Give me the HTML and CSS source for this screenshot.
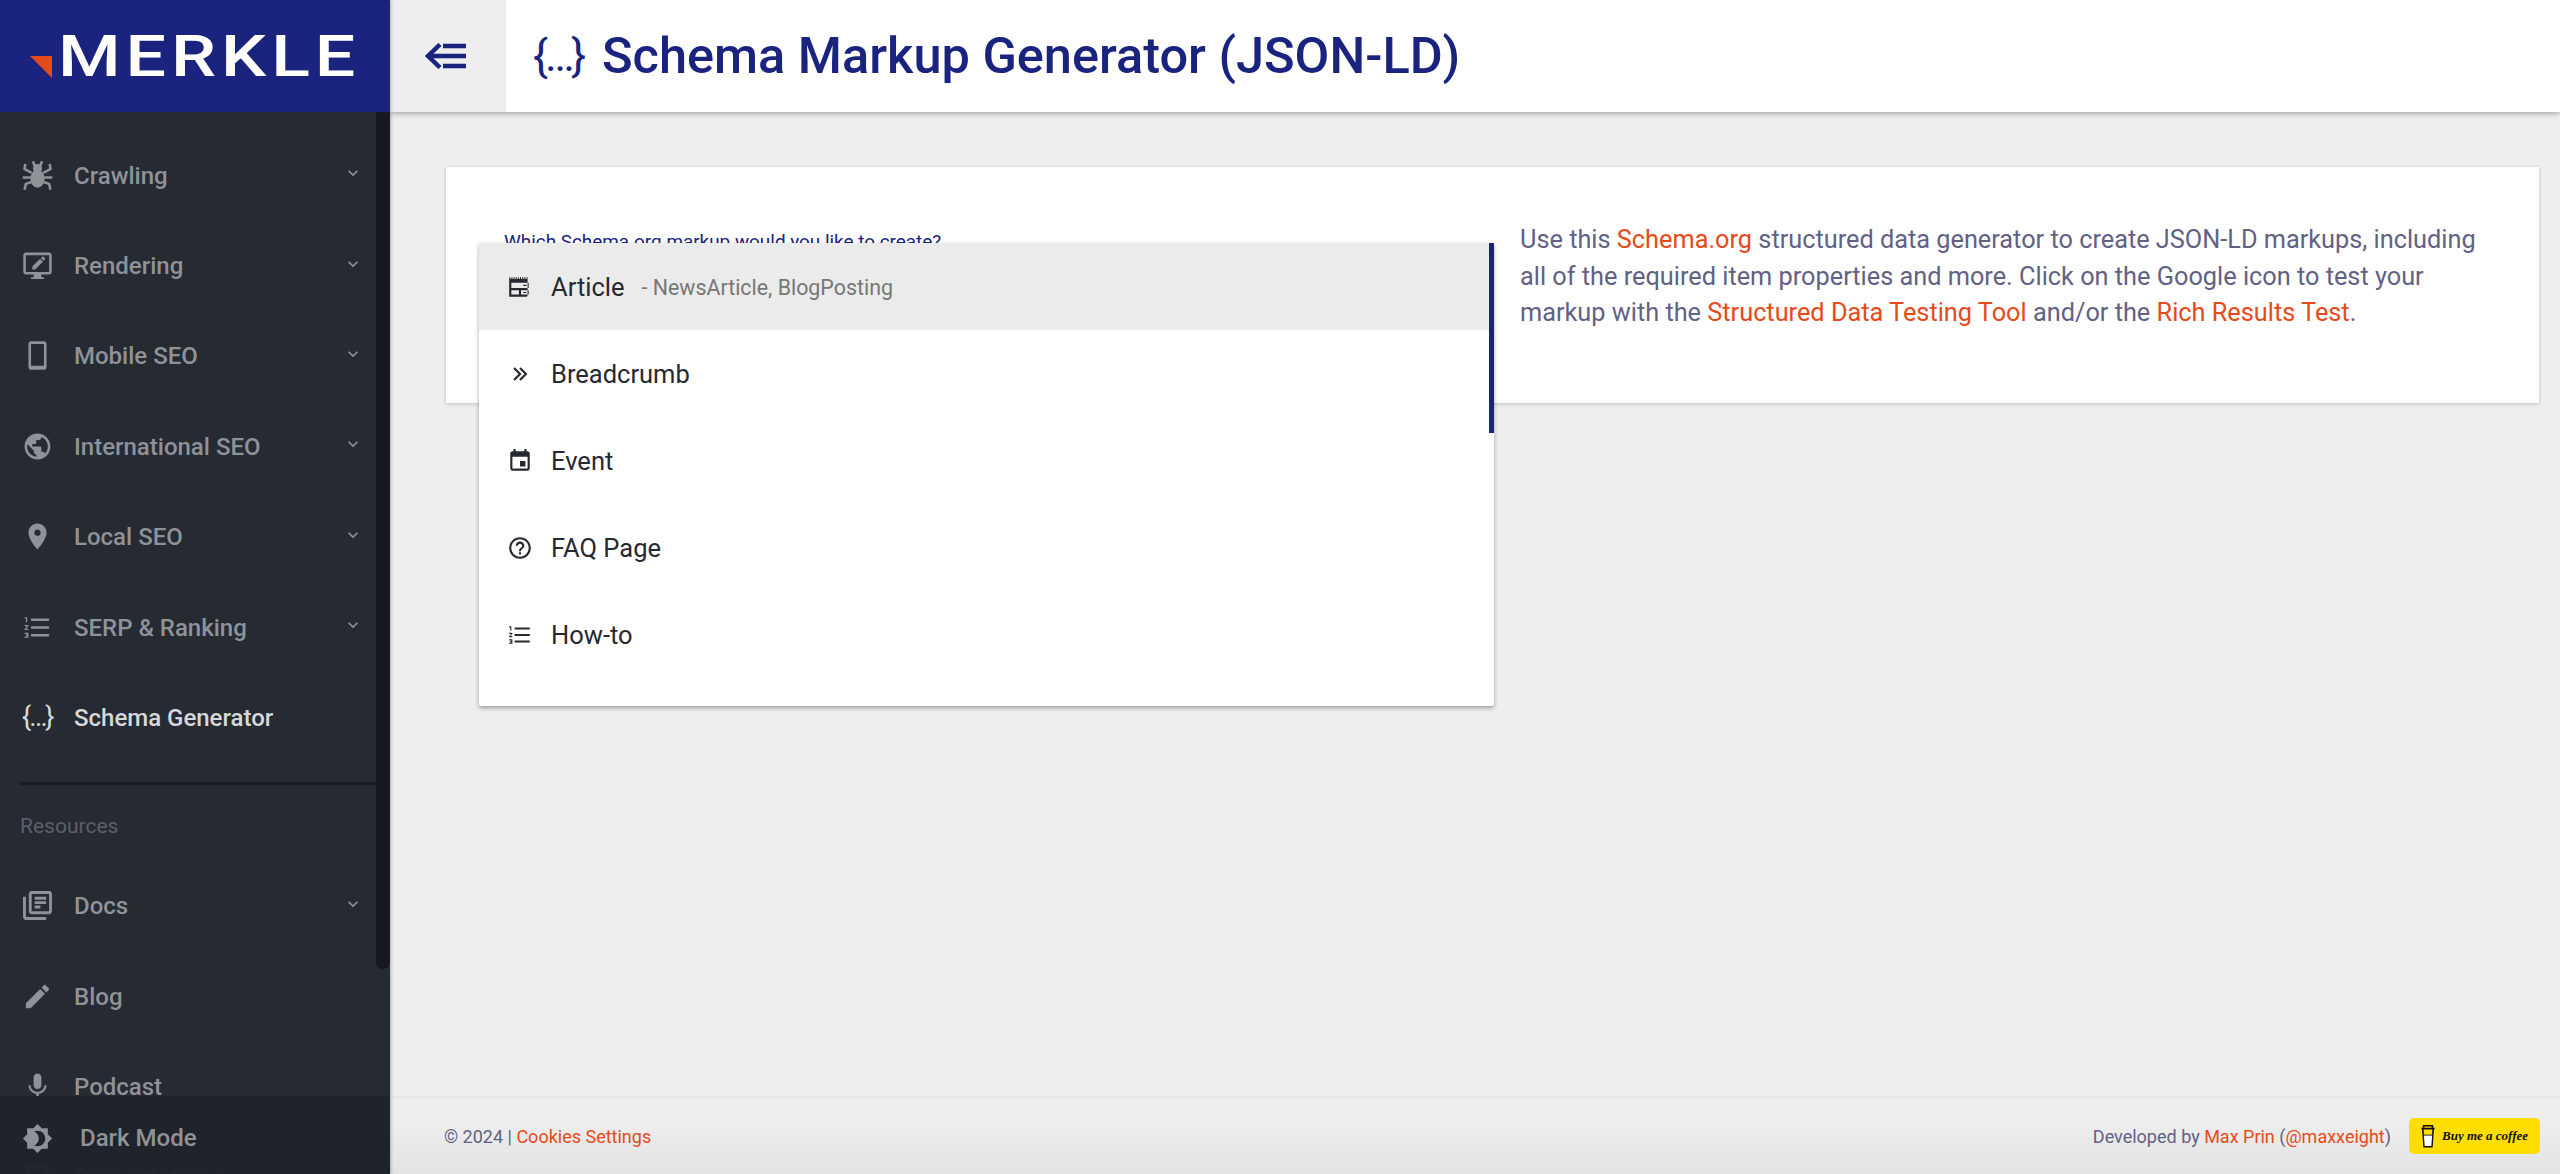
FILE: index.html
```html
<!DOCTYPE html>
<html lang="en">
<head>
<meta charset="utf-8">
<title>Schema Markup Generator (JSON-LD)</title>
<link rel="stylesheet" href="styles.css">
</head>
<body>
<div class="app">
  <aside class="sidebar">
    <div class="brand"><span class="brand-mark"></span><span class="brand-name">MERKLE</span></div>
    <div class="side-body">
      <nav class="nav">
        <a class="nav-item">
          <svg class="nav-icon" viewBox="0 0 24 24"><ellipse cx="12" cy="14.500" rx="5.500" ry="7" fill="currentColor"/><circle cx="12" cy="6.500" r="3.500" fill="currentColor"/><path d="M10 5 8.500 1M14 5l1.500-4M7.500 10 2 7l.5-4M16.500 10l5.500-3-.5-4M7 13.500H.5M17 13.500h6.500M7.500 17l-4.500 1.500-1 4.500M16.500 17l4.500 1.500 1 4.500" fill="none" stroke="currentColor" stroke-width="2"/></svg>
          <span class="nav-label">Crawling</span>
          <svg class="chev" viewBox="0 0 24 24"><path d="M16.590 8.590 12 13.170 7.410 8.590 6 10l6 6 6-6z"/></svg>
        </a>
        <a class="nav-item">
          <svg class="nav-icon" viewBox="0 0 24 24"><path d="M3 2h18c1 0 2 1 2 2v13c0 1-1 2-2 2h-6v2h2v1.500H7V21h2v-2H3c-1 0-2-1-2-2V4c0-1 1-2 2-2zm0 2v13h18V4H3zm5 11v-2.200l6-6 2.200 2.200-6 6H8zm8.800-6.600-2.200-2.200 1-1c.3-.3.700-.3 1 0l1.200 1.200c.3.300.3.700 0 1l-1 1z"/></svg>
          <span class="nav-label">Rendering</span>
          <svg class="chev" viewBox="0 0 24 24"><path d="M16.590 8.590 12 13.170 7.410 8.590 6 10l6 6 6-6z"/></svg>
        </a>
        <a class="nav-item">
          <svg class="nav-icon" viewBox="0 0 24 24"><path d="M17 1.010 7 1c-1.100 0-2 .9-2 2v18c0 1.100.9 2 2 2h10c1.100 0 2-.9 2-2V3c0-1.100-.9-1.990-2-1.990zM17 20H7V3h10v17z"/></svg>
          <span class="nav-label">Mobile SEO</span>
          <svg class="chev" viewBox="0 0 24 24"><path d="M16.590 8.590 12 13.170 7.410 8.590 6 10l6 6 6-6z"/></svg>
        </a>
        <a class="nav-item">
          <svg class="nav-icon" viewBox="0 0 24 24"><path d="M12 2C6.480 2 2 6.480 2 12s4.480 10 10 10 10-4.480 10-10S17.520 2 12 2zm-1 17.930c-3.950-.49-7-3.850-7-7.930 0-.62.08-1.210.21-1.790L9 15v1c0 1.100.9 2 2 2v1.930zm6.900-2.540c-.26-.81-1-1.390-1.900-1.390h-1v-3c0-.55-.45-1-1-1H8v-2h2c.55 0 1-.45 1-1V7h2c1.100 0 2-.9 2-2v-.41c2.930 1.190 5 4.060 5 7.410 0 2.080-.8 3.970-2.100 5.390z"/></svg>
          <span class="nav-label">International SEO</span>
          <svg class="chev" viewBox="0 0 24 24"><path d="M16.590 8.590 12 13.170 7.410 8.590 6 10l6 6 6-6z"/></svg>
        </a>
        <a class="nav-item">
          <svg class="nav-icon" viewBox="0 0 24 24"><path d="M12 2C8.130 2 5 5.130 5 9c0 5.250 7 13 7 13s7-7.750 7-13c0-3.870-3.130-7-7-7zm0 9.500c-1.380 0-2.500-1.120-2.500-2.500s1.120-2.500 2.500-2.500 2.500 1.120 2.500 2.500-1.120 2.500-2.500 2.500z"/></svg>
          <span class="nav-label">Local SEO</span>
          <svg class="chev" viewBox="0 0 24 24"><path d="M16.590 8.590 12 13.170 7.410 8.590 6 10l6 6 6-6z"/></svg>
        </a>
        <a class="nav-item">
          <svg class="nav-icon" viewBox="0 0 24 24"><path d="M2 17h2v.5H3v1h1v.5H2v1h3v-4H2v1zm1-9h1V4H2v1h1v3zm-1 3h1.800L2 13.100v.9h3v-1H3.200L5 10.900V10H2v1zm5-6v2h14V5H7zm0 14h14v-2H7v2zm0-6h14v-2H7v2z"/></svg>
          <span class="nav-label">SERP &amp; Ranking</span>
          <svg class="chev" viewBox="0 0 24 24"><path d="M16.590 8.590 12 13.170 7.410 8.590 6 10l6 6 6-6z"/></svg>
        </a>
        <a class="nav-item is-active">
          <span class="nav-icon brace-icon">{…}</span>
          <span class="nav-label">Schema Generator</span>
        </a>
        <hr class="nav-rule">
        <div class="nav-heading">Resources</div>
        <a class="nav-item">
          <svg class="nav-icon icon-docs" viewBox="0 0 24 24"><path d="M4 6H2v14c0 1.100.9 2 2 2h14v-2H4V6zm16-4H8c-1.100 0-2 .9-2 2v12c0 1.100.9 2 2 2h12c1.100 0 2-.9 2-2V4c0-1.100-.9-2-2-2zm0 14H8V4h12v12zM10 9h8v2h-8zm0 3h4v2h-4zm0-6h8v2h-8z"/></svg>
          <span class="nav-label">Docs</span>
          <svg class="chev" viewBox="0 0 24 24"><path d="M16.590 8.590 12 13.170 7.410 8.590 6 10l6 6 6-6z"/></svg>
        </a>
        <a class="nav-item">
          <svg class="nav-icon" viewBox="0 0 24 24"><path d="M3 17.250V21h3.750L17.810 9.940l-3.750-3.750L3 17.250zM20.710 7.040c.39-.39.39-1.020 0-1.410l-2.340-2.340c-.39-.39-1.020-.39-1.410 0l-1.830 1.830 3.750 3.750 1.830-1.830z"/></svg>
          <span class="nav-label">Blog</span>
        </a>
        <a class="nav-item">
          <svg class="nav-icon" viewBox="0 0 24 24"><path d="M12 14c1.660 0 2.990-1.340 2.990-3L15 5c0-1.660-1.340-3-3-3S9 3.340 9 5v6c0 1.660 1.340 3 3 3zm5.300-3c0 3-2.540 5.100-5.300 5.100S6.700 14 6.700 11H5c0 3.410 2.720 6.230 6 6.720V21h2v-3.280c3.280-.48 6-3.300 6-6.720h-1.700z"/></svg>
          <span class="nav-label">Podcast</span>
        </a>
        <a class="nav-item">
          <svg class="nav-icon" viewBox="0 0 24 24"><path d="M19 5H5v14h14V5zM5 3h14c1.100 0 2 .9 2 2v14c0 1.100-.9 2-2 2H5c-1.100 0-2-.9-2-2V5c0-1.100.9-2 2-2z"/></svg>
          <span class="nav-label">Presentations</span>
        </a>
      </nav>
      <div class="side-thumb"></div>
      <div class="dark-mode">
        <svg class="nav-icon" viewBox="0 0 24 24"><path d="M20 8.690V4h-4.690L12 .69 8.690 4H4v4.690L.69 12 4 15.310V20h4.690L12 23.310 15.310 20H20v-4.690L23.310 12 20 8.690zM12 18c-.89 0-1.740-.2-2.500-.55C11.560 16.500 13 14.420 13 12s-1.440-4.500-3.500-5.450C10.260 6.200 11.110 6 12 6c3.310 0 6 2.690 6 6s-2.690 6-6 6z"/></svg>
        <span class="dark-label">Dark Mode</span>
      </div>
    </div>
  </aside>

  <div class="main">
    <header class="topbar">
      <button class="toggle" type="button" aria-label="Toggle menu">
        <svg class="toggle-icon" viewBox="0 0 42 26"><path d="M15 1.500 3 13l12 11.500M3 13h38M18 3h23M18 23h23" fill="none" stroke="currentColor" stroke-width="4.500"/></svg>
      </button>
      <h1 class="title"><span class="title-icon">{…}</span>Schema Markup Generator (JSON-LD)</h1>
    </header>

    <main class="content">
      <section class="card">
        <div class="picker">
          <label class="picker-label">Which Schema.org markup would you like to create?</label>
        </div>
        <p class="intro">Use this <a>Schema.org</a> structured data generator to create JSON-LD markups, including all of the required item properties and more. Click on the Google icon to test your markup with the <a>Structured Data Testing Tool</a> and/or the <a>Rich Results Test</a>.</p>
        <ul class="menu">
          <li class="menu-item is-hover">
            <svg class="menu-icon" viewBox="0 0 24 24"><path d="M3 3v1.500h1V3h1v1.500h1V3h1v1.500h1V3h1v1.500h1V3h1v1.500h1V3h1v1.500h1V3h1v1.500h1V3h1v1.500h1V3h1v16.500c0 1-.8 1.500-1.500 1.500h-17C2.800 21 2 20.500 2 19.500V3h1zm1 5v5h16V8H4zm0 7v4h7v-4H4zm9 0v4h7v-4h-7zm2-4v-1h3v1h-3zm0 5.500h3v1h-3z"/></svg>
            <span>Article</span><span class="menu-sub">- NewsArticle, BlogPosting</span>
          </li>
          <li class="menu-item">
            <svg class="menu-icon" viewBox="0 0 24 24"><path d="M6.500 6.500 12 12l-5.500 5.500M12 6.500l5.500 5.500-5.500 5.500" fill="none" stroke="currentColor" stroke-width="2"/></svg>
            <span>Breadcrumb</span>
          </li>
          <li class="menu-item">
            <svg class="menu-icon" viewBox="0 0 24 24"><path d="M17 12h-5v5h5v-5zM16 1v2H8V1H6v2H5c-1.110 0-1.990.9-1.990 2L3 19c0 1.100.89 2 2 2h14c1.100 0 2-.9 2-2V5c0-1.100-.9-2-2-2h-1V1h-2zm3 18H5V8h14v11z"/></svg>
            <span>Event</span>
          </li>
          <li class="menu-item">
            <svg class="menu-icon" viewBox="0 0 24 24"><path d="M11 18h2v-2h-2v2zm1-16C6.480 2 2 6.480 2 12s4.480 10 10 10 10-4.480 10-10S17.520 2 12 2zm0 18c-4.410 0-8-3.590-8-8s3.590-8 8-8 8 3.590 8 8-3.590 8-8 8zm0-14c-2.210 0-4 1.790-4 4h2c0-1.100.9-2 2-2s2 .9 2 2c0 2-3 1.750-3 5h2c0-2.250 3-2.500 3-5 0-2.210-1.790-4-4-4z"/></svg>
            <span>FAQ Page</span>
          </li>
          <li class="menu-item">
            <svg class="menu-icon" viewBox="0 0 24 24"><path d="M2 17h2v.5H3v1h1v.5H2v1h3v-4H2v1zm1-9h1V4H2v1h1v3zm-1 3h1.800L2 13.100v.9h3v-1H3.200L5 10.900V10H2v1zm5-6v2h14V5H7zm0 14h14v-2H7v2zm0-6h14v-2H7v2z"/></svg>
            <span>How-to</span>
          </li>
          <li class="menu-thumb"></li>
        </ul>
      </section>
    </main>

    <footer class="footer">
      <div class="foot-left">© 2024 | <a>Cookies Settings</a></div>
      <div class="foot-right">
        <span>Developed by <a>Max Prin</a> (<a>@maxxeight</a>)</span>
        <a class="coffee">
          <svg class="coffee-icon" viewBox="0 0 18 28"><path d="M3 6h12l-1.500 20h-9z" fill="#fff" stroke="#111" stroke-width="1.600"/><path d="M3.500 6 4.200 13h9.600L14.500 6z" fill="#ffdd00" stroke="#111" stroke-width="1"/><path d="M1.500 5.500h15M4 5V2.500h10V5" fill="none" stroke="#111" stroke-width="1.800"/></svg>
          <span>Buy me a coffee</span>
        </a>
      </div>
    </footer>
  </div>
</div>
</body>
</html>
```

FILE: styles.css
```css
* { box-sizing: border-box; }

html, body { margin: 0; height: 100%; }

body {
  font-family: Roboto, "Liberation Sans", sans-serif;
  background: #eeeeee;
  color: #616184;
  overflow: hidden;
}

a { color: #e64a19; text-decoration: none; }

.app {
  display: grid;
  grid-template-columns: 390px 1fr;
  height: 100vh;
  overflow: hidden;
}

/* Sidebar */
.sidebar {
  display: flex;
  flex-direction: column;
  min-height: 0;
  background: #252a33;
  position: relative;
  z-index: 2;
  box-shadow: 1px 0 3px rgba(0, 0, 0, .25);
}

.brand {
  flex: 0 0 112px;
  background: #1a237e;
  display: flex;
  align-items: center;
  padding-left: 30px;
}

.brand-mark {
  width: 22px;
  height: 22px;
  margin-top: 22px;
  margin-right: 6px;
  background: #e64a19;
  clip-path: polygon(0 0, 100% 0, 100% 100%);
}

.brand-name {
  display: inline-block;
  color: #fff;
  font-family: Roboto, sans-serif;
  font-weight: 500;
  font-size: 58px;
  line-height: 1;
  letter-spacing: 4px;
  transform: scaleX(1.235);
  transform-origin: left center;
}

.side-body {
  flex: 1;
  min-height: 0;
  position: relative;
  overflow: hidden;
}

.nav { padding-top: 18px; padding-right: 14px; }

.nav-item {
  height: 90.400px;
  display: flex;
  align-items: center;
  padding-left: 22px;
  color: #8f9297;
  font-size: 24px;
  font-weight: 500;
}

.nav-item.is-active { color: #d6d8da; }

.nav-icon {
  flex: 0 0 31px;
  width: 31px;
  height: 31px;
  fill: currentColor;
  margin-right: 21px;
}

.icon-docs { transform: scale(1.12); }

.brace-icon {
  font-size: 27px;
  font-weight: 400;
  line-height: 31px;
  white-space: nowrap;
  letter-spacing: -2px;
}

.nav-label { flex: 1; padding-top: 1px; }

.chev {
  width: 20px;
  height: 20px;
  fill: #8f9297;
  margin-right: 13px;
  margin-top: -4px;
}

.nav-rule {
  border: 0;
  height: 3px;
  background: #181b22;
  margin: 19px 0 0 20px;
}

.nav-heading {
  padding-left: 20px;
  font-size: 21px;
  line-height: 28px;
  margin: 27px 0 21px;
  color: #5d6066;
}

.side-thumb {
  position: absolute;
  top: 0;
  right: 0;
  width: 14px;
  height: 857px;
  background: #15181d;
  border-radius: 0 0 7px 7px;
}

.dark-mode {
  position: absolute;
  left: 0;
  right: 0;
  bottom: 0;
  height: 78px;
  display: flex;
  align-items: center;
  padding: 6px 0 0 22px;
  background: rgba(31, 35, 43, .97);
  color: #8f9297;
  font-size: 24px;
  font-weight: 500;
}

.dark-label { margin-left: 6px; }

/* Main column */
.main {
  display: flex;
  flex-direction: column;
  min-width: 0;
  min-height: 0;
}

.topbar {
  flex: 0 0 112px;
  display: flex;
  align-items: center;
  background: #fff;
  box-shadow: 0 2px 5px rgba(0, 0, 0, .28);
  position: relative;
  z-index: 1;
}

.toggle {
  flex: 0 0 116px;
  height: 100%;
  border: 0;
  padding: 0;
  background: #eeeeee;
  color: #1a237e;
  display: flex;
  align-items: center;
  justify-content: center;
}

.toggle-icon { width: 42px; height: 26px; margin-left: -5px; }

.title {
  margin: 0 0 0 27px;
  display: flex;
  align-items: center;
  color: #1a237e;
  font-size: 50.500px;
  font-weight: 500;
  line-height: 1;
}

.title-icon {
  width: 51px;
  margin-right: 18px;
  font-size: 44px;
  font-weight: 400;
  white-space: nowrap;
  letter-spacing: -3px;
}

.content {
  flex: 1;
  min-height: 0;
  padding: 55px 21px 0 56px;
}

.card {
  position: relative;
  display: grid;
  grid-template-columns: 1074px 1fr;
  height: 236px;
  background: #fff;
  box-shadow: 0 1px 4px rgba(0, 0, 0, .2);
}

.picker { padding: 63px 0 0 58px; }

.picker-label {
  display: block;
  color: #1a237e;
  font-size: 18.900px;
  line-height: 24px;
}

.intro {
  margin: 0;
  padding: 55px 50px 0 0;
  font-size: 25.300px;
  line-height: 36.500px;
}

/* Open dropdown overlay */
.menu {
  position: absolute;
  left: 33px;
  top: 76px;
  width: 1015px;
  height: 463px;
  margin: 0;
  padding: 0;
  list-style: none;
  background: #fff;
  box-shadow: 0 2px 4px rgba(0, 0, 0, .35);
  border-radius: 2px;
}

.menu-item {
  height: 87px;
  display: flex;
  align-items: center;
  padding-left: 28px;
  color: #26292f;
  font-size: 25.500px;
}

.menu-item.is-hover { background: #ebebeb; }

.menu-icon {
  flex: 0 0 26px;
  width: 26px;
  height: 26px;
  fill: currentColor;
  margin-right: 18px;
}

.menu-sub {
  margin-left: 17px;
  color: #777;
  font-size: 21.400px;
  padding-top: 2px;
}

.menu-thumb {
  position: absolute;
  top: 0;
  right: 0;
  width: 5px;
  height: 190px;
  background: #1a237e;
}

/* Footer */
.footer {
  flex: 0 0 78px;
  display: flex;
  align-items: center;
  justify-content: space-between;
  padding: 0 20px 0 54px;
  border-top: 2px solid #e6e6e6;
  background: linear-gradient(#eeeeee 30%, #e3e3e3);
  font-size: 18px;
}

.foot-right {
  display: flex;
  align-items: center;
  gap: 18px;
}

.coffee {
  width: 131px;
  height: 36px;
  display: flex;
  align-items: center;
  gap: 6px;
  padding-left: 11px;
  background: #ffdd00;
  border-radius: 5px;
  color: #111;
  font-family: "Liberation Serif", serif;
  font-size: 13px;
  font-style: italic;
  font-weight: 700;
  white-space: nowrap;
}

.coffee-icon { width: 16px; height: 26px; flex: none; }
```
